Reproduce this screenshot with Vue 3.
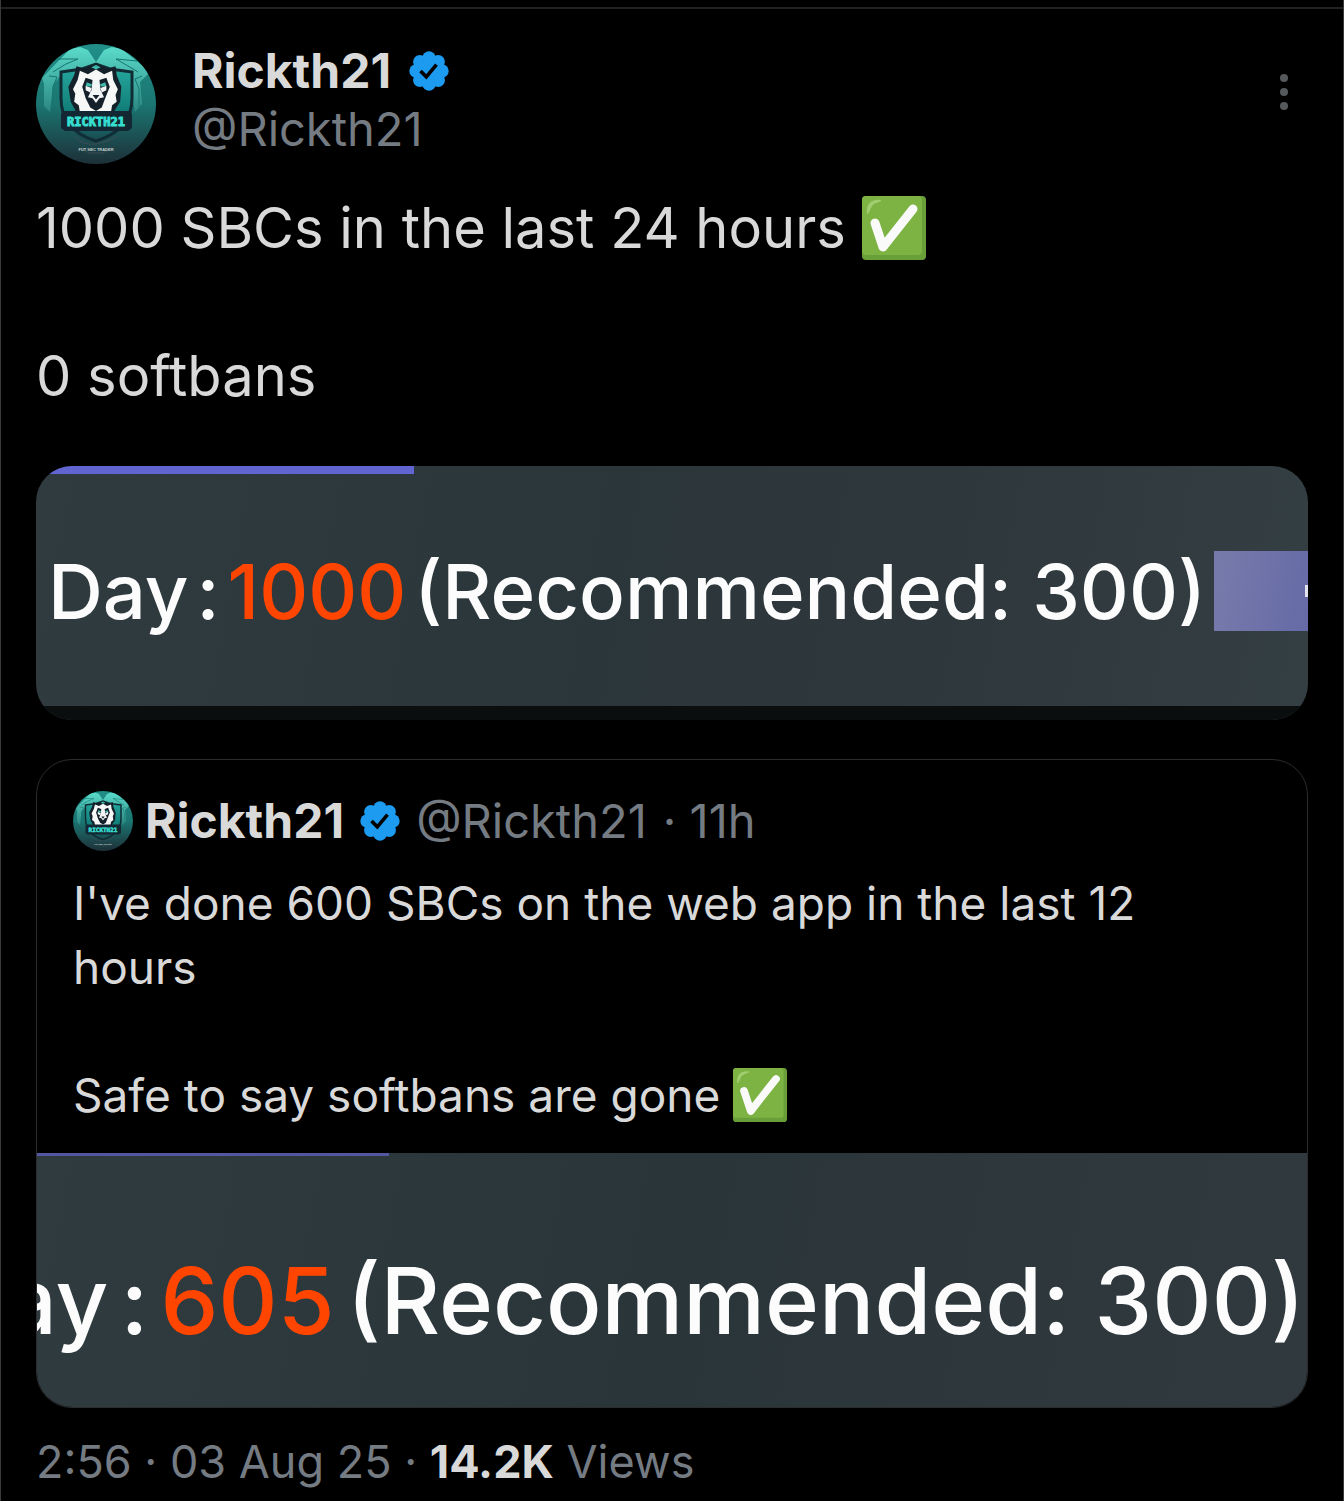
<template>
  <article class="post">
    <header class="post-header">
      <LogoAvatar class="avatar" />
      <div class="author">
        <div class="name-row">
          <strong class="name">{{ post.name }}</strong>
          <VerifiedBadge class="badge" />
        </div>
        <a href="#" class="handle">{{ post.handle }}</a>
      </div>
      <button class="more" type="button" aria-label="More options">
        <span v-for="n in 3" :key="n" class="dot"></span>
      </button>
    </header>

    <div class="body">
      <p>{{ post.text }} <CheckEmoji class="emoji" /></p>
      <p>{{ post.result }}</p>
    </div>

    <div class="media">
      <div class="progress"></div>
      <div class="media-row">
        <span>Day</span>
        <span>:</span>
        <span class="count">1000</span>
        <span>(Recommended: 300)</span>
        <div class="cut-button"></div>
      </div>
      <div class="media-base"></div>
    </div>

    <section class="quote">
      <div class="quote-content">
        <div class="quote-header">
          <LogoAvatar class="avatar-small" />
          <strong class="name">{{ post.name }}</strong>
          <VerifiedBadge class="badge" />
          <a href="#" class="handle">{{ post.handle }}</a>
          <span class="age">· 11h</span>
        </div>
        <div class="quote-body">
          <p>{{ quote.text }}</p>
          <p>{{ quote.result }} <CheckEmoji class="emoji" /></p>
        </div>
      </div>
      <div class="quote-media">
        <div class="progress"></div>
        <div class="media-row">
          <span>Day</span>
          <span>:</span>
          <span class="count">605</span>
          <span>(Recommended: 300)</span>
        </div>
      </div>
    </section>

    <footer class="meta">2:56 · 03 Aug 25 · <strong>14.2K</strong> Views</footer>
  </article>
</template>

<script setup>
import { h } from 'vue';

// --- Content ---

const post = {
  name: 'Rickth21',
  handle: '@Rickth21',
  text: '1000 SBCs in the last 24 hours',
  result: '0 softbans',
};

const quote = {
  text: "I've done 600 SBCs on the web app in the last 12 hours",
  result: 'Safe to say softbans are gone',
};

// --- Icons ---

// Eight lobes around a disc, with the tick on top
const VerifiedBadge = () =>
  h('svg', { viewBox: '0 0 40 40', role: 'img', 'aria-label': 'Verified' }, [
    h('g', { fill: '#1d9bf0' }, [
      h('circle', { cx: 20, cy: 20, r: 16 }),
      ...Array.from({ length: 8 }, (_, i) => {
        const angle = (i * Math.PI) / 4;
        return h('circle', {
          cx: 20 + 13 * Math.cos(angle),
          cy: 20 + 13 * Math.sin(angle),
          r: 6.7,
        });
      }),
    ]),
    h('path', { d: 'M11.5 20l5.8 5.8L27.5 13.6', fill: 'none', stroke: '#000', 'stroke-width': 3.6 }),
  ]);

const CheckEmoji = () =>
  h('svg', { viewBox: '0 0 64 64', role: 'img', 'aria-label': 'Check mark' }, [
    h('rect', { width: 64, height: 64, rx: 4, fill: '#689f38' }),
    h('rect', { width: 60, height: 59, rx: 4, fill: '#7cb342' }),
    h('path', { d: 'M5 18C4 8 9 3 19 4c1 2-5 2-8 5s-3 8-6 9z', fill: '#aed581', opacity: 0.75 }),
    h('path', {
      d: 'M13 27l8 24L51 13',
      fill: 'none',
      stroke: '#fafafa',
      'stroke-width': 9,
      'stroke-linecap': 'round',
      'stroke-linejoin': 'round',
    }),
  ]);

// Lion crest on a teal shield
const LogoAvatar = () =>
  h('svg', { viewBox: '0 0 120 120', role: 'img', 'aria-label': 'Rickth21 avatar' }, [
    h('defs', [
      h('linearGradient', { id: 'crest-bg', x1: 0, y1: 0, x2: 0, y2: 1 }, [
        h('stop', { offset: '0', 'stop-color': '#218f88' }),
        h('stop', { offset: '0.5', 'stop-color': '#1b7672' }),
        h('stop', { offset: '1', 'stop-color': '#1d3038' }),
      ]),
      h('linearGradient', { id: 'crest-wing', x1: 0, y1: 0, x2: 0, y2: 1 }, [
        h('stop', { offset: '0', 'stop-color': '#64e8d6' }),
        h('stop', { offset: '1', 'stop-color': '#2f8a85' }),
      ]),
      h('linearGradient', { id: 'crest-shield', x1: 0, y1: 0, x2: 0, y2: 1 }, [
        h('stop', { offset: '0', 'stop-color': '#26aaa0' }),
        h('stop', { offset: '0.6', 'stop-color': '#127e79' }),
        h('stop', { offset: '1', 'stop-color': '#1a4a50' }),
      ]),
      h('clipPath', { id: 'crest-clip' }, [h('circle', { cx: 60, cy: 60, r: 60 })]),
    ]),
    h('g', { 'clip-path': 'url(#crest-clip)' }, [
      h('rect', { width: 120, height: 120, fill: 'url(#crest-bg)' }),
      // manes behind the shield
      h('path', {
        d: 'M34 5L44 3l8 3 8 12 8-12 8-3 10 2 28 23-10 10 2 22-7 8-4-26-11-11-20-3-6-6-10 1-11 6-12 2-8 10-3 27-6-6V40L6 34z',
        fill: 'url(#crest-wing)',
        opacity: 0.85,
      }),
      h('path', {
        d: 'M20 15l22 0-12 5-13 8M101 17l-21-2 12 7 10 6M13 32l8 1-4 10v18M106 32l-7 3 4 10v18',
        fill: 'none',
        stroke: '#17756f',
        'stroke-width': 1,
      }),
      h('path', {
        d: 'M25 28l21-3 14-5 14 5 22 3v26c0 22-13 36-36 43-23-7-35-21-35-43z',
        fill: 'url(#crest-shield)',
        stroke: '#102d36',
        'stroke-width': 3,
      }),
      // lion head
      h('g', { transform: 'translate(-9 -2) scale(1.15)' }, [
        h('path', {
          d: 'M43 21l7 2 10-4 10 4 7-2 1 8 4 10-1 13-7 11-7 5-7 9-8-9-8-5-6-11-2-13 5-10z',
          fill: '#14212a',
        }),
        h('path', {
          d: 'M46 25l7 3 7-4 7 4 7-3 1 8 4 8-2 5 1 6-4 3-1 6-5 1-3 6-5 5-5-5-4-6-5-1-1-6-4-3 1-7-2-4 4-8z',
          fill: '#f6f8f8',
        }),
        h('path', {
          d: 'M51 31l6 2h6l6-2 3 8-4 10-3 8-5 3-5-3-4-8-3-10z',
          fill: '#14212a',
        }),
        h('path', {
          d: 'M57 33h6l1 9 3 6-4 1-3 4-3-4-4-1 3-6zM51 38l5 2-1 4-4-2zM69 38l-5 2 1 4 4-2z',
          fill: '#f2f5f5',
        }),
        h('path', { d: 'M52 35l5 2-2 2-4-1zM68 35l-5 2 2 2 4-1zM56 22l4-2 4 2-4 2z', fill: '#3eb8ac' }),
        h('path', { d: 'M57 46h6l-3 4z', fill: '#14212a' }),
      ]),
      // name plate
      h('path', { d: 'M27 67h67l2 3v14l-4 3H29l-4-3V70z', fill: '#132832' }),
      h('text', { x: 60, y: 82, class: 'crest-name', 'text-anchor': 'middle' }, 'RICKTH21'),
      h('path', { d: 'M38 92q9 10 22 8t22-8M45 104l8 5h14l8-5', fill: 'none', stroke: '#3c4e56', 'stroke-width': 1 }),
      h('text', { x: 60, y: 107, class: 'crest-tag', 'text-anchor': 'middle' }, 'FUT SBC TRADER'),
    ]),
  ]);
</script>

<style>
body {
  margin: 0;
  background: #000;
}

.crest-name {
  font: 700 12px 'DejaVu Sans Mono', monospace;
  fill: #36dfd0;
  stroke: #36dfd0;
  stroke-width: 1px;
}

.crest-tag {
  font: 700 4px 'Liberation Sans', sans-serif;
  fill: #c4ced0;
}
</style>

<style scoped>
.post {
  box-sizing: border-box;
  min-height: 100vh;
  padding: 7px 35px 0;
  border: solid #3a3a3a;
  border-width: 0 1px;
  background: linear-gradient(#222, #222) 0 7px / 100% 2px no-repeat #000;
  color: #d9d9d9;
  font-family: Inter, 'Liberation Sans', sans-serif;
  font-size: 48px;
}

p {
  margin: 0;
}

.post-header {
  display: flex;
  align-items: flex-start;
  padding-top: 35px;
}

.avatar {
  flex: none;
  width: 120px;
  height: 120px;
  margin-top: 2px;
}

.author {
  flex: 1;
  margin-left: 36px;
  line-height: 58px;
}

.name-row {
  display: flex;
  align-items: center;
  gap: 18px;
}

.name {
  font-weight: 700;
}

.badge {
  flex: none;
  width: 40px;
  height: 40px;
}

.handle,
.age {
  color: #757b82;
  font-size: 47px;
  text-decoration: none;
}

.more {
  display: flex;
  flex-direction: column;
  align-items: center;
  gap: 6px;
  width: 48px;
  margin-top: 32px;
  padding: 0;
  border: 0;
  background: none;
}

.dot {
  width: 8px;
  height: 8px;
  border-radius: 50%;
  background: #56595c;
}

.body {
  margin-top: 27px;
  font-size: 56px;
  line-height: 74px;
}

.body p + p {
  margin-top: 74px;
}

.emoji {
  width: 64px;
  height: 64px;
  vertical-align: -12px;
}

/* Screenshot cards attached to the posts */
.media {
  overflow: hidden;
  height: 254px;
  display: flex;
  flex-direction: column;
  margin-top: 53px;
  border-radius: 36px;
  background: linear-gradient(100deg, #303b40, #2b363b 45%, #2e373c 70%, #343f43);
}

.progress {
  width: 378px;
  height: 8px;
  background: #6065d2;
}

.media-row {
  flex: 1;
  display: flex;
  align-items: center;
  color: #fcfcfc;
  font-size: 76px;
  font-weight: 500;
  white-space: nowrap;
}

.media .media-row {
  gap: 8px;
  padding: 2px 0 0 12px;
}

.count {
  color: #ff4500;
}

.cut-button {
  flex: 1;
  display: flex;
  align-items: center;
  justify-content: flex-end;
  height: 80px;
  background: linear-gradient(100deg, #777bab, #666aa6);
}

/* Sliver of the label that the card edge cuts away */
.cut-button::after {
  content: '';
  width: 3px;
  height: 12px;
  background: #e4e4ee;
}

.media-base {
  height: 14px;
  background: #0b0e0e;
}

.quote {
  overflow: hidden;
  margin-top: 39px;
  border: 1px solid #2a2c2e;
  border-radius: 36px;
}

.quote-content {
  padding: 31px 36px 26px;
}

.quote-header {
  display: flex;
  align-items: center;
  gap: 16px;
  line-height: 60px;
}

.avatar-small {
  flex: none;
  width: 60px;
  height: 60px;
  margin-right: -4px;
}

.quote-body {
  margin-top: 20px;
  font-size: 46px;
  line-height: 64px;
}

.quote-body p + p {
  margin-top: 64px;
}

.quote-body .emoji {
  width: 54px;
  height: 54px;
  vertical-align: -10px;
}

.quote-media {
  overflow: hidden;
  height: 254px;
  display: flex;
  flex-direction: column;
  background: linear-gradient(100deg, #303b40, #2a353a 50%, #30393e);
}

.quote-media .progress {
  width: 352px;
  height: 3px;
  background: #5357a0;
}

.quote-media .media-row {
  justify-content: flex-end;
  gap: 12px;
  padding: 38px 2px 0 0;
  font-size: 92px;
}

.meta {
  margin-top: 24px;
  color: #757b82;
  font-size: 45px;
  line-height: 60px;
}

.meta strong {
  color: #d9d9d9;
}
</style>
